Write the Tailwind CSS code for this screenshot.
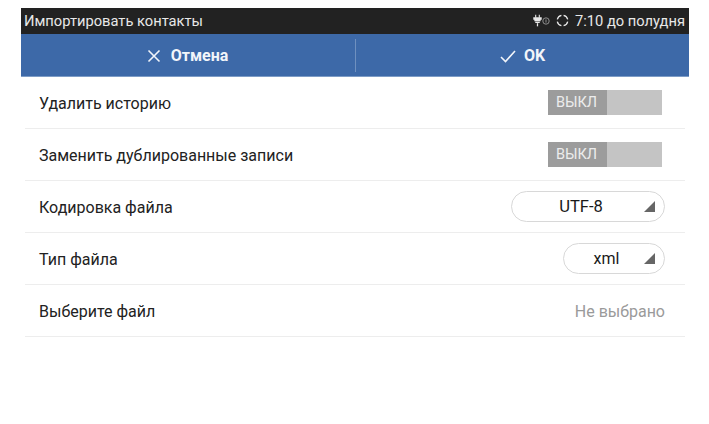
<!DOCTYPE html>
<html>
<head>
    <meta charset="utf-8">
    <title>Импортировать контакты</title>
    <script src="https://cdn.jsdelivr.net/npm/@tailwindcss/browser@4"></script>
</head>
<body class="bg-white">
    <div class="h-[424px] w-[709px] overflow-hidden bg-white pt-2 pl-[21px] font-['Roboto',sans-serif]">
        <div class="w-[668px]">
            <!-- status bar -->
            <div class="flex h-[26px] items-center justify-between bg-[#222222] pr-1 pl-[3px] text-[14.7px] text-[#e8e8e8]">
                <span>Импортировать контакты</span>
                <div class="flex items-center">
                    <svg width="9" height="15" viewBox="0 0 10 14" fill="none" stroke="#e8e8e8">
                        <path d="M3 0.5V4M7 0.5V4" stroke-width="1.2"/>
                        <path d="M1 4h8v1.5H1zM1.5 7h7M2.5 9h5" stroke-width="1.4"/>
                        <path d="M5 10v3.5" stroke-width="1.4"/>
                    </svg>
                    <svg width="8" height="8" viewBox="0 0 8 8" fill="none" stroke="#9a9a9a">
                        <circle cx="4" cy="4" r="3.2" stroke-width="0.9"/>
                        <path d="M4 2.4V5.6" stroke-width="0.9"/>
                    </svg>
                    <svg class="ml-[6px]" width="13" height="13" viewBox="0 0 12 12" fill="none" stroke="#e8e8e8" stroke-width="1.2">
                        <path d="M1.2 5A5 5 0 0 1 5 1.2M7 1.2A5 5 0 0 1 10.8 5M10.8 7A5 5 0 0 1 7 10.8M5 10.8A5 5 0 0 1 1.2 7"/>
                    </svg>
                    <span class="ml-[6px]">7:10 до полудня</span>
                </div>
            </div>
            <!-- action bar -->
            <div class="flex h-[43px] items-center border-b border-[#7d9cc6] bg-[#3d69a8] text-[16px] font-bold text-[#f2f5fa]">
                <div class="flex w-[334px] items-center justify-center gap-[10px] pt-[2px] pr-px">
                    <svg width="14" height="14" viewBox="0 0 14 14" fill="none" stroke="#f2f5fa" stroke-width="1.6">
                        <path d="M1.5 1.5L12.5 12.5M12.5 1.5L1.5 12.5"/>
                    </svg>
                    <span>Отмена</span>
                </div>
                <div class="h-[33px] w-px bg-[#6f90bf]"></div>
                <div class="flex flex-1 items-center justify-center gap-2 pt-[2px]">
                    <svg width="16" height="13" viewBox="0 0 16 13" fill="none" stroke="#f2f5fa" stroke-width="1.6">
                        <path d="M1 7L5.5 11.5L15 1"/>
                    </svg>
                    <span>OK</span>
                </div>
            </div>
            <!-- settings rows -->
            <div class="px-1 text-[16px] text-[#222222]">
                <div class="flex h-[52px] items-center justify-between border-b border-[#ededed] pr-[23px] pl-[14px]">
                    <span class="pt-[2px]">Удалить историю</span>
                    <div class="flex h-[25px] w-[114px] bg-[#c4c4c4]">
                        <div class="flex w-[59px] items-center justify-center bg-[#9c9c9c] pr-[2px] text-[14.5px] text-[#ececec]">ВЫКЛ</div>
                    </div>
                </div>
                <div class="flex h-[52px] items-center justify-between border-b border-[#ededed] pr-[23px] pl-[14px]">
                    <span class="pt-[2px]">Заменить дублированные записи</span>
                    <div class="flex h-[25px] w-[114px] bg-[#c4c4c4]">
                        <div class="flex w-[59px] items-center justify-center bg-[#9c9c9c] pr-[2px] text-[14.5px] text-[#ececec]">ВЫКЛ</div>
                    </div>
                </div>
                <div class="flex h-[52px] items-center justify-between border-b border-[#ededed] pr-5 pl-[14px]">
                    <span class="pt-[2px]">Кодировка файла</span>
                    <div class="relative flex h-[31px] w-[154px] items-center justify-center rounded-full border border-[#d8d8d8] pr-[14px] text-[16.6px] text-[#1a1a1a]">
                        <span class="pt-px">UTF-8</span>
                        <svg class="absolute right-[9px] bottom-[9px]" width="11" height="11" viewBox="0 0 10 10"><path d="M10 0V10H0Z" fill="#666666"/></svg>
                    </div>
                </div>
                <div class="flex h-[52px] items-center justify-between border-b border-[#ededed] pr-5 pl-[14px]">
                    <span class="pt-[2px]">Тип файла</span>
                    <div class="relative flex h-[31px] w-[102px] items-center justify-center rounded-full border border-[#d8d8d8] pr-[15px] text-[#1a1a1a]">
                        <span class="pt-px">xml</span>
                        <svg class="absolute right-[9px] bottom-[9px]" width="11" height="11" viewBox="0 0 10 10"><path d="M10 0V10H0Z" fill="#666666"/></svg>
                    </div>
                </div>
                <div class="flex h-[52px] items-center justify-between border-b border-[#ededed] pr-5 pl-[14px]">
                    <span class="pt-[2px]">Выберите файл</span>
                    <span class="pt-[2px] text-[#9a9a9a]">Не выбрано</span>
                </div>
            </div>
        </div>
    </div>
</body>
</html>
